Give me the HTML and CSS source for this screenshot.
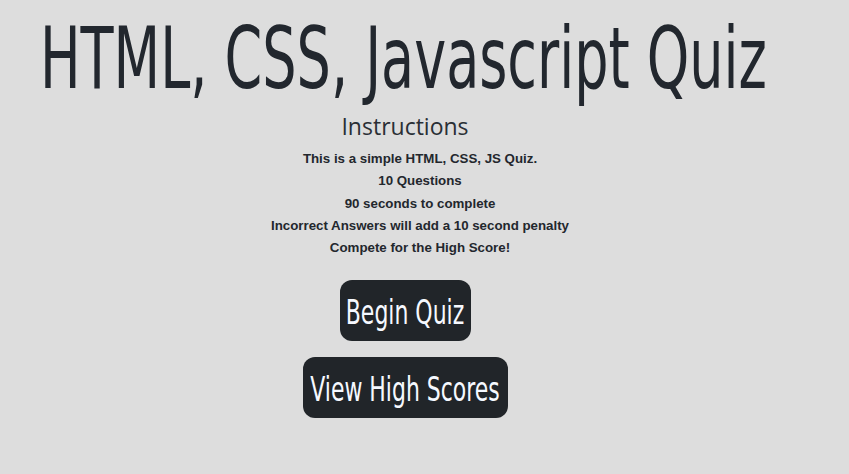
FILE: index.html
```html
<!DOCTYPE html>
<html>
<head>
<meta charset="utf-8">
<link rel="stylesheet" href="styles.css">
</head>
<body>
<header class="top">
  <h1 class="title"><span class="title-text">HTML, CSS, Javascript Quiz</span></h1>
</header>
<main class="intro">
  <h2 class="intro-heading">Instructions</h2>
  <div class="rules">
    <p>This is a simple HTML, CSS, JS Quiz.</p>
    <p>10 Questions</p>
    <p>90 seconds to complete</p>
    <p>Incorrect Answers will add a 10 second penalty</p>
    <p>Compete for the High Score!</p>
  </div>
  <div class="actions">
    <button class="btn btn-begin"><span class="btn-text">Begin Quiz</span></button>
    <button class="btn btn-scores"><span class="btn-text">View High Scores</span></button>
  </div>
</main>
</body>
</html>
```
FILE: styles.css
```css
html, body {
  margin: 0;
  padding: 0;
  background: #dddddd;
  color: #212529;
}
body {
  width: 849px;
  height: 474px;
  overflow: hidden;
}
.top {
  padding: 11px 0 0 40px;
  height: 94px;
}
.title {
  margin: 0;
  font-family: "DejaVu Sans Condensed", "DejaVu Sans", sans-serif;
  font-weight: 400;
  font-size: 86px;
  line-height: 94px;
  white-space: nowrap;
  width: 760px;
}
.title-text {
  display: inline-block;
  width: 1042px;
  margin-right: -314px;
  transform: scaleX(0.698);
  transform-origin: left center;
  color: #22272e;
}
.intro {
  display: flex;
  flex-direction: column;
  align-items: center;
  width: 810px;
}
.intro-heading {
  margin: 6px 0 7px;
  font-family: "Open Sans", sans-serif;
  font-weight: 400;
  font-size: 23px;
  line-height: 30px;
  color: #2a2f35;
}
.rules {
  display: flex;
  flex-direction: column;
  align-items: center;
  margin-left: 30px;
  font-family: "Liberation Sans", Arial, sans-serif;
  font-weight: 700;
  font-size: 13.3px;
  line-height: 22.3px;
  color: #23272d;
}
.rules p {
  margin: 0;
}
.actions {
  display: flex;
  flex-direction: column;
  align-items: center;
  gap: 16px;
  margin-top: 21px;
}
.btn {
  display: flex;
  align-items: center;
  justify-content: center;
  border: none;
  background: #212529;
  color: #f6f9ff;
  border-radius: 12px;
  font-family: "DejaVu Sans Condensed", "DejaVu Sans", sans-serif;
  font-size: 33px;
  padding: 3px 0 0;
  height: 61px;
}
.btn-begin {
  width: 131px;
}
.btn-scores {
  width: 205px;
}
.btn-text {
  display: inline-block;
  white-space: nowrap;
  transform: scaleX(0.74);
  transform-origin: center;
}
```
